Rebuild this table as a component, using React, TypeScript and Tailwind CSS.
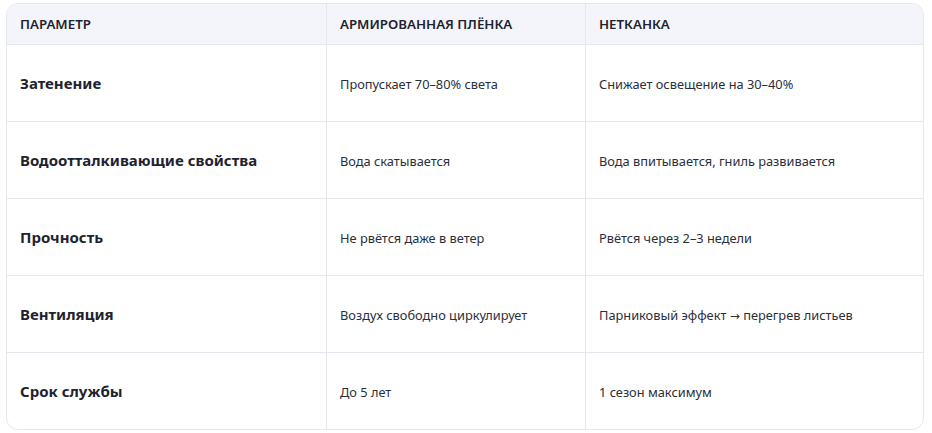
import React from "react";

const rows: [string, React.ReactNode, React.ReactNode][] = [
  ["Затенение", "Пропускает 70–80% света", "Снижает освещение на 30–40%"],
  ["Водоотталкивающие свойства", "Вода скатывается", "Вода впитывается, гниль развивается"],
  ["Прочность", "Не рвётся даже в ветер", "Рвётся через 2–3 недели"],
  [
    "Вентиляция",
    "Воздух свободно циркулирует",
    <>
      Парниковый эффект{" "}
      <span style={{ fontFamily: '"DejaVu Sans", sans-serif' }} className="text-[12px]">
        →
      </span>{" "}
      перегрев листьев
    </>,
  ],
  ["Срок службы", "До 5 лет", "1 сезон максимум"],
];

export default function App() {
  return (
    <div
      className="w-[932px] h-[433px] bg-white pl-[6px] pt-[3px]"
      style={{ fontFamily: '"Noto Sans", "Open Sans", sans-serif' }}
    >
      <div className="w-[918px] rounded-[12px] border border-[#e6e7ee] overflow-hidden">
        <div className="grid grid-cols-[320px_259px_1fr] h-[41px] bg-[#f4f5fa] border-b border-[#e6e7ee] text-[13.3px] font-semibold text-[#1f2330] uppercase">
          <div className="flex items-center px-[13px] pt-[2px] border-r border-[#e6e7ee]">Параметр</div>
          <div className="flex items-center px-[13px] pt-[2px] border-r border-[#e6e7ee]">Армированная плёнка</div>
          <div className="flex items-center px-[13px] pt-[2px]">Нетканка</div>
        </div>
        {rows.map((r, i) => (
          <div
            key={i}
            className={
              i < rows.length - 1
                ? "grid grid-cols-[320px_259px_1fr] h-[77px] border-b border-[#e6e7ee]"
                : "grid grid-cols-[320px_259px_1fr] h-[76px]"
            }
          >
            <div className="flex items-center px-[13px] pt-[1px] border-r border-[#e6e7ee] text-[15px] font-bold text-[#1f2330]">
              {r[0]}
            </div>
            <div className="flex items-center px-[13px] pt-[3px] border-r border-[#e6e7ee] text-[12.8px] text-[#2b2f3a]">
              {r[1]}
            </div>
            <div className="flex items-center px-[13px] pt-[3px] text-[12.8px] text-[#2b2f3a]">
              <span>{r[2]}</span>
            </div>
          </div>
        ))}
      </div>
    </div>
  );
}
